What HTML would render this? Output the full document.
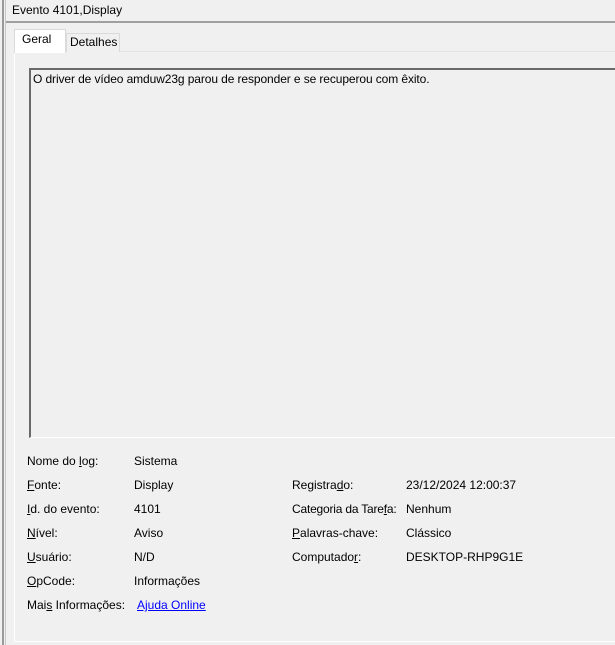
<!DOCTYPE html>
<html><head><style>
body{margin:0;width:615px;height:645px;background:#f0f0f0;font-family:"Liberation Sans",sans-serif;font-size:12px;color:#000;position:relative;overflow:hidden}
.a{position:absolute;white-space:nowrap}
u{text-decoration:underline}
</style></head><body>
<div class="a" style="left:2px;top:0;width:2px;height:645px;background:#9a9a9a"></div>
<div class="a" style="left:5px;top:0;width:1px;height:645px;background:#c8c8c8"></div>
<div class="a" style="left:12px;top:3px">Evento 4101,Display</div>
<div class="a" style="left:6px;top:21px;width:609px;height:2px;background:#a0a0a0"></div>
<div class="a" style="left:14px;top:51px;width:601px;height:589px;border-left:1px solid #fff;border-top:1px solid #e3e3e3;border-bottom:1px solid #fff"></div>
<div class="a" style="left:66px;top:33px;width:52px;height:18px;border:1px solid #dadada;border-bottom:none;background:#f0f0f0"></div>
<div class="a" style="left:70px;top:35px">Detalhes</div>
<div class="a" style="left:14px;top:29px;width:50px;height:23px;border:1px solid #dadada;border-bottom:none;background:#fff"></div>
<div class="a" style="left:22px;top:32px">Geral</div>
<div class="a" style="left:29px;top:68px;width:586px;height:367px;border-left:2px solid #6a6a6a;border-top:2px solid #6a6a6a;border-bottom:1px solid #fff;background:#f0f0f0"></div>
<div class="a" style="left:33px;top:72px;letter-spacing:-0.1px">O driver de vídeo amduw23g parou de responder e se recuperou com êxito.</div>
<div class="a" style="left:27px;top:454px">Nome do <u>l</u>og:</div><div class="a" style="left:134px;top:454px">Sistema</div>
<div class="a" style="left:27px;top:478px"><u>F</u>onte:</div><div class="a" style="left:134px;top:478px">Display</div>
<div class="a" style="left:27px;top:502px"><u>I</u>d. do evento:</div><div class="a" style="left:134px;top:502px">4101</div>
<div class="a" style="left:27px;top:526px"><u>N</u>ível:</div><div class="a" style="left:134px;top:526px">Aviso</div>
<div class="a" style="left:27px;top:550px"><u>U</u>suário:</div><div class="a" style="left:134px;top:550px">N/D</div>
<div class="a" style="left:27px;top:574px"><u>O</u>pCode:</div><div class="a" style="left:134px;top:574px">Informações</div>
<div class="a" style="left:27px;top:598px">Mai<u>s</u> Informações:</div><div class="a" style="left:137px;top:598px;color:#0000ff"><u>Ajuda Online</u></div>
<div class="a" style="left:292px;top:478px">Registra<u>d</u>o:</div><div class="a" style="left:406px;top:478px">23/12/2024 12:00:37</div>
<div class="a" style="left:292px;top:502px;letter-spacing:-0.2px">Categoria da Tare<u>f</u>a:</div><div class="a" style="left:406px;top:502px">Nenhum</div>
<div class="a" style="left:292px;top:526px"><u>P</u>alavras-chave:</div><div class="a" style="left:406px;top:526px">Clássico</div>
<div class="a" style="left:292px;top:550px">Computado<u>r</u>:</div><div class="a" style="left:406px;top:550px">DESKTOP-RHP9G1E</div>
</body></html>
